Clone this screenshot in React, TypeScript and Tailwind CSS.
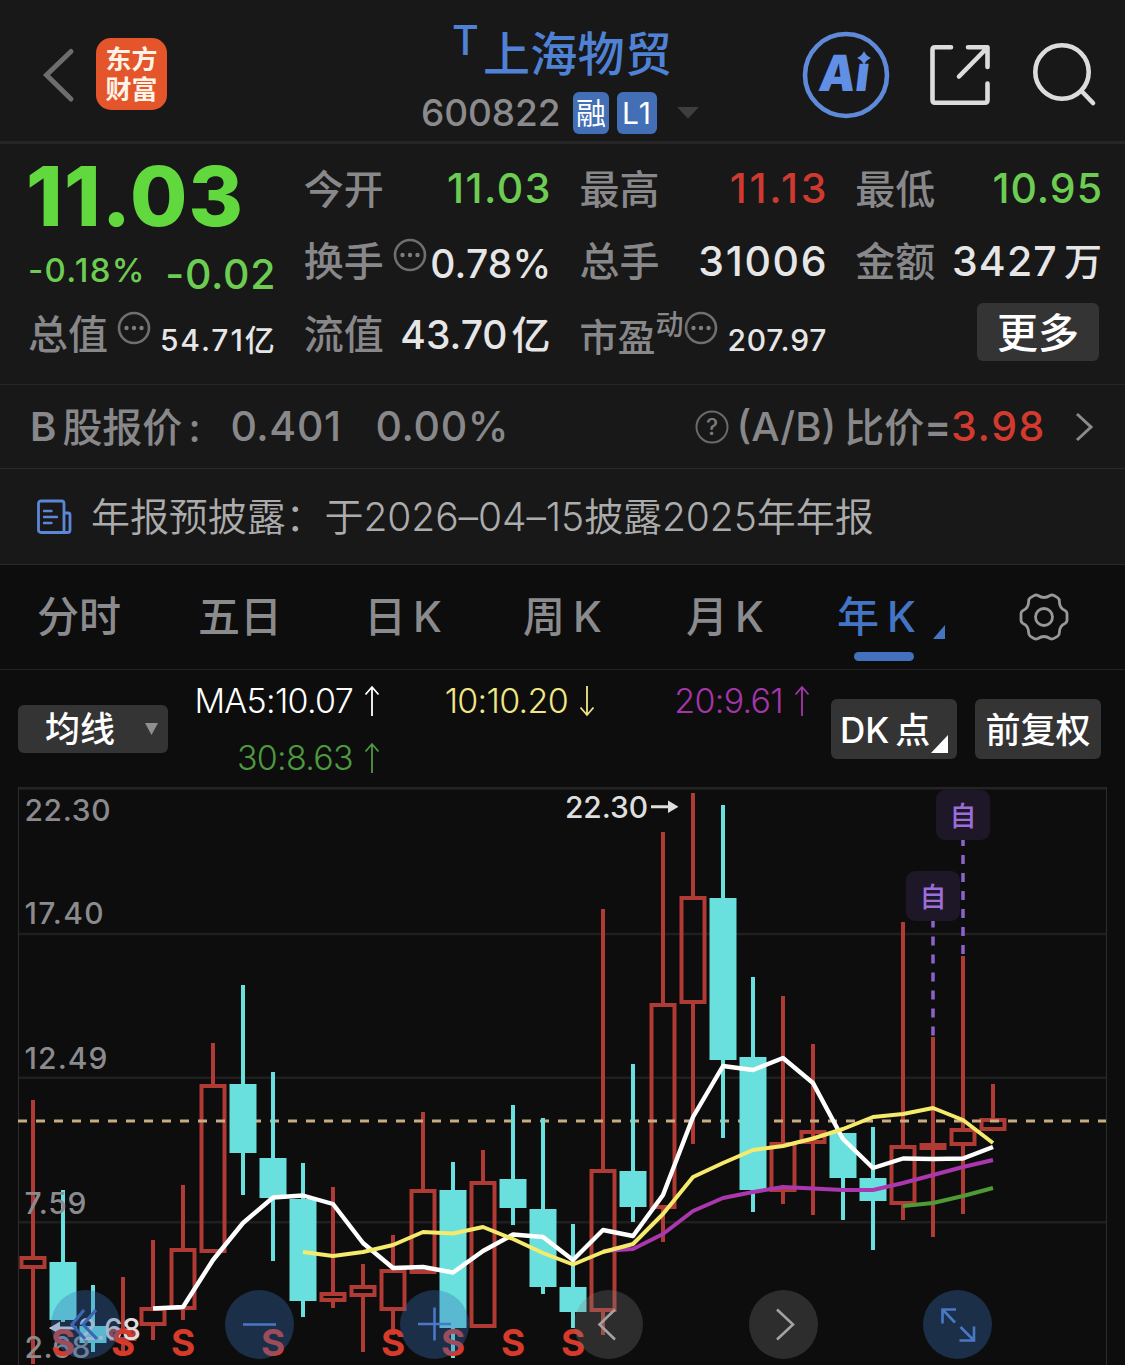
import type { ReactNode } from "react";

type Candle = {
  up: boolean;
  high: number;
  top: number;
  bottom: number;
  low: number;
};

const FIRST_X = 33;
const STEP = 30;

const RED = "#b03a34";
const CYAN = "#6ae0de";

const up = (high: number, top: number, bottom: number, low: number): Candle => ({
  up: true,
  high,
  top,
  bottom,
  low,
});

const down = (high: number, top: number, bottom: number, low: number): Candle => ({
  up: false,
  high,
  top,
  bottom,
  low,
});

const candles: Candle[] = [
  up(1100, 1256, 1269, 1364),
  down(1190, 1262, 1320, 1322),
  down(1285, 1326, 1343, 1352),
  up(1277, 1328, 1341, 1356),
  up(1240, 1307, 1326, 1340),
  up(1185, 1248, 1310, 1320),
  up(1043, 1084, 1253, 1253),
  down(985, 1084, 1153, 1195),
  down(1072, 1158, 1198, 1261),
  down(1163, 1199, 1301, 1317),
  up(1187, 1292, 1302, 1308),
  up(1264, 1285, 1297, 1352),
  up(1235, 1269, 1311, 1335),
  up(1112, 1189, 1274, 1274),
  down(1162, 1190, 1328, 1358),
  up(1150, 1181, 1328, 1328),
  down(1105, 1179, 1208, 1225),
  down(1118, 1209, 1287, 1294),
  down(1224, 1287, 1312, 1328),
  up(909, 1169, 1312, 1335),
  down(1064, 1171, 1207, 1222),
  up(832, 1003, 1209, 1242),
  up(793, 896, 1004, 1144),
  down(805, 898, 1060, 1138),
  down(977, 1057, 1190, 1212),
  up(996, 1142, 1192, 1204),
  up(1044, 1130, 1144, 1215),
  down(1133, 1133, 1178, 1220),
  down(1127, 1178, 1201, 1250),
  up(922, 1145, 1205, 1220),
  up(1037, 1143, 1150, 1237),
  up(956, 1128, 1146, 1214),
  up(1084, 1118, 1131, 1131),
];

const averages = [
  {
    color: "#4f9a35",
    start: 29,
    width: 4,
    values: [1206, 1203, 1196, 1188],
  },
  {
    color: "#ab37ae",
    start: 19,
    width: 4,
    values: [
      1251, 1249, 1234, 1211, 1198, 1192, 1187, 1188.5, 1190, 1190, 1183, 1175, 1167, 1160,
    ],
  },
  {
    color: "#ffffff",
    start: 4,
    width: 4.4,
    values: [
      1308.5, 1307, 1260, 1223, 1197.5, 1195.5, 1204, 1243, 1268, 1267, 1272.5, 1251, 1234.5,
      1237, 1260, 1230, 1236, 1195, 1117, 1066, 1070, 1058, 1083, 1139, 1168, 1158.5, 1159,
      1158.5, 1147,
    ],
  },
  {
    color: "#f6ea6c",
    start: 9,
    width: 4,
    values: [
      1252, 1256, 1252, 1245, 1232, 1233.5, 1227, 1239, 1253, 1264.5, 1252, 1244, 1214, 1177,
      1163, 1150, 1146, 1138.5, 1129, 1117, 1114, 1108, 1120, 1143,
    ],
  },
];

const axisLabels = [
  { text: "22.30", y: 821, width: 86 },
  { text: "17.40", y: 924, width: 79 },
  { text: "12.49", y: 1069, width: 83 },
  { text: "7.59", y: 1213.5, width: 62 },
  { text: "2.68", y: 1358, width: 66 },
];

const sellMarks = [63, 123, 183, 273, 393, 453, 513, 573];

function CandleShape({ candle, index }: { candle: Candle; index: number }) {
  const x = FIRST_X + index * STEP;
  const { high, top, bottom, low } = candle;

  if (!candle.up) {
    return (
      <g fill={CYAN}>
        <rect x={x - 2} y={high} width={4} height={low - high} />
        <rect x={x - 13.5} y={top} width={27} height={bottom - top} />
      </g>
    );
  }

  return (
    <g fill={RED}>
      <rect x={x - 2} y={high} width={4} height={top - high} />
      <rect x={x - 2} y={bottom} width={4} height={low - bottom} />
      <rect
        x={x - 11.5}
        y={top + 2}
        width={23}
        height={bottom - top - 4}
        fill="none"
        stroke={RED}
        strokeWidth={4}
      />
      {/* this wick runs straight through its short body */}
      {index === 26 && <rect x={x - 2} y={top} width={4} height={bottom - top} />}
    </g>
  );
}

function SelfPick({ x, y }: { x: number; y: number }) {
  return (
    <g>
      <rect x={x - 27} y={y} width={54} height={50} rx={9} fill="#1e1728" />
      <text x={x} y={y + 35.5} fontSize={27} fontWeight={500} fill="#9d6ddb" textAnchor="middle">
        自
      </text>
    </g>
  );
}

function Chart() {
  const indexed = candles.map((candle, index) => ({ candle, index }));

  return (
    <svg className="block" width="1125" height="578" viewBox="0 787 1125 578">
      <g stroke="#242425" strokeWidth={2.5} fill="none">
        <path d="M18 788.2H1107" />
        <path d="M18 934H1107M18 1077.7H1107M18 1222.3H1107" stroke="#1f1f20" />
        <path d="M18.5 787V1365M1106.5 787V1365" strokeWidth={1.2} stroke="#2a2a2b" />
      </g>

      {indexed
        .filter(({ candle }) => candle.up)
        .map(({ candle, index }) => (
          <CandleShape key={index} candle={candle} index={index} />
        ))}
      <path d="M18 1121H1106" stroke="#c9ab80" strokeWidth={3} strokeDasharray="9 9" />
      {indexed
        .filter(({ candle }) => !candle.up)
        .map(({ candle, index }) => (
          <CandleShape key={index} candle={candle} index={index} />
        ))}

      {averages.map((line) => (
        <polyline
          key={line.color}
          points={line.values
            .map((value, i) => `${FIRST_X + (line.start + i) * STEP},${value}`)
            .join(" ")}
          fill="none"
          stroke={line.color}
          strokeWidth={line.width}
          strokeLinejoin="round"
        />
      ))}

      <g stroke="#8d62cc" strokeWidth={3.5} strokeDasharray="9 9">
        <path d="M933 921V1036" strokeDashoffset={2.5} />
        <path d="M963 840V956" strokeDashoffset={3} />
      </g>
      <SelfPick x={963} y={790} />
      <SelfPick x={933} y={871} />

      <g fontSize={30} fontWeight={500} fill="#8b8b8e">
        {axisLabels.map((label) => (
          <text key={label.text} x={24.5} y={label.y} textLength={label.width}>
            {label.text}
          </text>
        ))}
      </g>

      <g fontSize={30} fontWeight={500} fill="#dededf">
        <text x={565} y={817.7} textLength={83}>
          22.30
        </text>
        <path d="M651 805.3H668V800.5L678.5 806.8L668 813V808.3H651Z" />
        <text x={78} y={1340} textLength={63}>
          2.68
        </text>
        <path d="M77 1326.5H60V1321.5L49 1328L60 1334.5V1329.5H77Z" />
      </g>

      <g fontSize={37} fontWeight={700} fill="#d53a2b" textAnchor="middle">
        {sellMarks.map((x) => (
          <text key={x} x={x} y={1356}>
            S
          </text>
        ))}
      </g>
    </svg>
  );
}

function RoundButton({ blue, children }: { blue?: boolean; children: ReactNode }) {
  return (
    <button
      className={
        blue
          ? "size-[69px] rounded-full bg-[#3670b8]/35 text-[#4a78c4]"
          : "size-[69px] rounded-full bg-[#808080]/28 text-[#a3a3a4]"
      }
    >
      <svg
        className="block"
        width="69"
        height="69"
        viewBox="0 0 69 69"
        fill="none"
        stroke="currentColor"
        strokeWidth="2.6"
      >
        {children}
      </svg>
    </button>
  );
}

function ChartControls() {
  return (
    <div className="absolute left-[50.5px] top-[503px] flex w-[942px] justify-between">
      <RoundButton blue>
        <path d="M33 20L21 34.5L34 49M45 20L32 34.5L46 49" stroke="#3a66b4" strokeWidth="3.2" />
      </RoundButton>
      <RoundButton blue>
        <path d="M18 34.5H51" />
      </RoundButton>
      <RoundButton blue>
        <path d="M18 34H51M34.5 17.5V50.5" />
      </RoundButton>
      <RoundButton>
        <path d="M41 19.5L25.5 34.5L41 49.5" />
      </RoundButton>
      <RoundButton>
        <path d="M28 19.5L44 34.5L28 49.5" />
      </RoundButton>
      <RoundButton blue>
        <path d="M33 19.5H19.5V33.5M19.500 19.5L32 32.5M51 36.5V50.5H36.5M51 50.5L37.5 37" />
      </RoundButton>
    </div>
  );
}

function MoreDots() {
  return (
    <svg className="-mt-3 block shrink-0" width="34" height="34" viewBox="0 0 34 34">
      <circle cx="17" cy="17" r="15" fill="none" stroke="#6f6f70" strokeWidth="2.6" />
      <g fill="#7d7d7e">
        <circle cx="9.5" cy="17" r="2.2" />
        <circle cx="17" cy="17" r="2.2" />
        <circle cx="24.5" cy="17" r="2.2" />
      </g>
    </svg>
  );
}

function Header() {
  return (
    <header className="flex h-[144px] border-b-3 border-[#262627]">
      <div className="flex w-[421px] items-start pl-[42px] pt-[38px]">
        <svg width="34" height="72" viewBox="0 0 34 72" fill="none" stroke="#6d6d6d">
          <path d="M29 13.5L4.5 37L29 61" strokeWidth="5" strokeLinecap="round" />
        </svg>
        <div className="ml-[20px] flex h-[72px] w-[71px] flex-col items-center justify-center rounded-[15px] bg-[#e5552c] pt-0.5 text-[26px] font-bold leading-[30px] text-[#fff3e6]">
          <span>东方</span>
          <span>财富</span>
        </div>
      </div>

      <div className="w-[280px]">
        <div className="flex pl-[31px] pt-[19px] text-[#4f81d5]">
          <span className="mt-[0.5px] w-[31px] text-[41px] font-medium leading-none">T</span>
          <span className="mt-[11px] text-[47px] font-medium leading-none tracking-[0.3px]">
            上海物贸
          </span>
        </div>
        <div className="mt-[14px] flex items-center">
          <span className="w-[152px] text-[37px] font-medium leading-none tracking-[-0.1px] text-[#8b8b8d]">
            600822
          </span>
          <span className="mt-px flex h-[42px] w-[36px] items-center justify-center rounded-md bg-[#426fb5] text-[30px] leading-none text-white">
            融
          </span>
          <span className="ml-2 mt-px flex h-[42px] w-[40px] items-center justify-center rounded-md bg-[#426fb5] text-[30px] leading-none tracking-[1px] text-white">
            L1
          </span>
          <svg className="ml-[20px]" width="22" height="12" viewBox="0 0 22 12">
            <path d="M0 0H22L11 11.5Z" fill="#3e3e3f" />
          </svg>
        </div>
      </div>

      <div className="flex items-start pt-[30px]">
        <svg className="ml-[100px]" width="90" height="90" viewBox="0 0 90 90">
          <circle cx="45" cy="45" r="41" fill="none" stroke="#5f8ad9" strokeWidth="4.6" />
          <text
            x="24"
            y="61"
            fontSize="50"
            fontWeight="900"
            fill="#628fe6"
            textLength="50"
            lengthAdjust="spacingAndGlyphs"
            transform="skewX(-7)"
          >
            Aı
          </text>
          <path d="M63 21Q65 26 70 28Q65 30 63 35Q61 30 56 28Q61 26 63 21Z" fill="#628fe6" />
        </svg>
        <svg
          className="ml-[37px]"
          width="66"
          height="90"
          viewBox="0 0 66 90"
          fill="none"
          stroke="#dcdcdc"
          strokeWidth="4.6"
          strokeLinecap="round"
          strokeLinejoin="round"
        >
          <path d="M23 17.3H7Q4.5 17.3 4.5 20V70Q4.5 72.7 7 72.7H57Q59.5 72.7 59.5 70V53.5" />
          <path d="M40 17.3H59.5V37M58.5 18.5L31 46.5" />
        </svg>
        <svg
          className="ml-[37px]"
          width="70"
          height="90"
          viewBox="0 0 70 90"
          fill="none"
          stroke="#dcdcdc"
          strokeWidth="4.6"
          strokeLinecap="round"
        >
          <circle cx="31" cy="42" r="26.7" />
          <path d="M50.5 61L62 73" />
        </svg>
      </div>
    </header>
  );
}

function Cell({ label, children }: { label: ReactNode; children: ReactNode }) {
  return (
    <div className="flex h-[72.5px] items-center justify-between whitespace-nowrap font-medium leading-none">
      <div className="flex items-center pt-[3px] text-[40px] text-[#88888b]">{label}</div>
      <div className="flex items-center pt-px text-[41px] text-[#e6e6e7]">{children}</div>
    </div>
  );
}

function Quote() {
  return (
    <section className="grid h-[241px] grid-cols-4 content-start gap-x-[29px] border-b border-[#262627] pl-[28px] pr-[23px] pt-2">
      <div className="-ml-0.5 flex h-[72.5px] items-center whitespace-nowrap pt-4 text-[83px] font-extrabold leading-none tracking-[1.3px] text-[#62d83f]">
        11.03
      </div>
      <Cell label="今开">
        <span className="-mr-[1.5px] tracking-[1.5px] text-[#6ccd52]">11.03</span>
      </Cell>
      <Cell label="最高">
        <span className="-mr-[3px] tracking-[2.8px] text-[#cf3a30]">11.13</span>
      </Cell>
      <Cell label="最低">
        <span className="-mr-px tracking-[1px] text-[#6ccd52]">10.95</span>
      </Cell>

      <div className="flex h-[72.5px] items-center justify-between whitespace-nowrap font-medium leading-none text-[#6ccd52]">
        <span className="pt-[19px] text-[33px] tracking-[1.3px]">-0.18%</span>
        <span className="-mr-[1.5px] pt-7 text-[41px] tracking-[0.7px]">-0.02</span>
      </div>
      <Cell
        label={
          <>
            换手
            <span className="-mt-0.5 ml-[9px]">
              <MoreDots />
            </span>
          </>
        }
      >
        <span className="-mr-px pt-1 text-[39px] tracking-[0.2px]">0.78%</span>
      </Cell>
      <Cell label="总手">
        <span className="-mr-[2px] tracking-[1.7px]">31006</span>
      </Cell>
      <Cell label="金额">
        <span className="tracking-[1.2px]">3427</span>
        <span className="ml-1.5 text-[38px]">万</span>
      </Cell>

      <Cell
        label={
          <>
            总值
            <span className="-mt-0.5 ml-[9px]">
              <MoreDots />
            </span>
          </>
        }
      >
        <span className="pt-3 text-[30px] tracking-[1.9px]">54.71</span>
        <span className="pt-3 text-[30px]">亿</span>
      </Cell>
      <Cell label="流值">
        <span className="pt-0.5 text-[39px]">
          43.70<span className="ml-1">亿</span>
        </span>
      </Cell>
      <Cell
        label={
          <>
            <span className="pt-1 text-[38px]">市盈</span>
            <span className="-mt-5 text-[28px]">动</span>
            <span className="-mt-0.5">
              <MoreDots />
            </span>
          </>
        }
      >
        <span className="-mr-px pt-3 text-[30px] tracking-[0.8px]">207.97</span>
      </Cell>
      <div className="flex h-[72.5px] items-center justify-end pb-0.5 pr-[3px]">
        <button className="h-[58px] w-[122px] rounded-md bg-[#343435] pt-0.5 text-[41px] font-medium leading-none text-white">
          更多
        </button>
      </div>
    </section>
  );
}

function BShareRow() {
  return (
    <section className="flex h-[84px] items-center whitespace-nowrap border-b border-[#29292a] pl-[30px] pr-[31px] text-[40px] font-medium leading-none text-[#88888a]">
      <span className="font-semibold">B</span>
      <span className="ml-1.5 w-[168px] pt-0.5">
        股报价<span className="ml-1.5">:</span>
      </span>
      <span className="w-[145px] text-[41px] tracking-[0.6px]">0.401</span>
      <span className="text-[41px] tracking-[0.7px]">0.00%</span>
      <svg className="ml-auto" width="36" height="36" viewBox="0 0 36 36" fill="none">
        <circle cx="18" cy="18" r="15.5" stroke="#6a6a6b" strokeWidth="2" />
        <text x="18" y="26" fontSize="23" fill="#7b7b7c" textAnchor="middle">
          ?
        </text>
      </svg>
      <span className="ml-[7px]">(A/B)</span>
      <span className="ml-2 pt-0.5">比价</span>
      <span className="font-semibold">=</span>
      <span className="text-[41px] tracking-[1.6px] text-[#d23a2e]">3.98</span>
      <svg className="ml-[28px]" width="20" height="32" viewBox="0 0 20 32" fill="none">
        <path d="M3 3L17 16L3 29" stroke="#8b8b8d" strokeWidth="3" />
      </svg>
    </section>
  );
}

function NewsRow() {
  return (
    <section className="flex h-[96px] items-center whitespace-nowrap border-b border-[#29292a] pl-[36px] text-[39px] leading-none text-[#acacad]">
      <svg
        width="36"
        height="36"
        viewBox="0 0 36 36"
        fill="none"
        stroke="#5c86d6"
        strokeWidth="2.8"
        strokeLinejoin="round"
      >
        <path d="M28 33.5H5Q2.5 33.5 2.5 31V4.5Q2.5 2 5 2H25.5Q28 2 28 4.5Z" />
        <path d="M28 14H32Q34 14 34 16V31Q34 33.5 31.5 33.5H28" />
        <path d="M8 12H15.5M8 18H21M8 24H15.5" strokeLinecap="round" strokeWidth="2.4" />
      </svg>
      <p className="ml-[19px] font-[350] tracking-[-0.08px]">
        年报预披露：于2026–04–15披露2025年年报
      </p>
    </section>
  );
}

function Tabs() {
  return (
    <nav className="flex h-[105px] items-center whitespace-nowrap border-b border-[#222223] bg-[#0d0d0d] pl-[37px] text-[42px] font-medium leading-none text-[#8b8b8e]">
      <span className="w-[161px]">分时</span>
      <span className="w-[166px]">五日</span>
      <span className="w-[159px]">
        日<span className="ml-[7px]">K</span>
      </span>
      <span className="w-[163px]">
        周<span className="ml-2">K</span>
      </span>
      <span className="w-[151px]">
        月<span className="ml-[7px]">K</span>
      </span>
      <span className="relative flex h-full w-[110px] items-center text-[#4475c4]">
        年<span className="ml-2">K</span>
        <svg className="ml-[17px] mt-[29px]" width="12" height="14" viewBox="0 0 12 14">
          <path d="M12 0V14H0Z" fill="currentColor" />
        </svg>
        <span className="absolute bottom-[8px] left-[17px] h-[9px] w-[60px] rounded-full bg-[#4371bd]" />
      </span>
      <svg
        className="ml-[72px]"
        width="50"
        height="50"
        viewBox="0 0 50 50"
        fill="none"
        stroke="#98989a"
        strokeWidth="2.8"
        strokeLinejoin="round"
      >
        <path d="M19 3.5Q25 7.5 31 3.5Q33 2.5 35 3.6L38.5 5.6Q40.500 7 40.3 9Q40.5 16.5 46 18.5Q47.8 19.5 48 21.5V28.5Q47.8 30.5 46 31.5Q40.5 33.5 40.3 41Q40.5 43 38.5 44.4L35 46.4Q33 47.5 31 46.5Q25 42.5 19 46.5Q17 47.5 15 46.4L11.5 44.4Q9.5 43 9.7 41Q9.5 33.5 4 31.5Q2.2 30.5 2 28.5V21.5Q2.2 19.5 4 18.5Q9.5 16.5 9.7 9Q9.5 7 11.5 5.6L15 3.6Q17 2.5 19 3.5Z" />
        <circle cx="25" cy="25" r="8.5" />
      </svg>
    </nav>
  );
}

function Arrow({ flip }: { flip?: boolean }) {
  return (
    <svg
      className={flip ? "ml-[11px] block shrink-0 rotate-180" : "ml-[11px] block shrink-0"}
      width="16"
      height="32"
      viewBox="0 0 16 32"
      fill="none"
      stroke="currentColor"
      strokeWidth="1.8"
    >
      <path d="M8 31V2M1.5 9.5L8 2L14.5 9.5" />
    </svg>
  );
}

function Indicators() {
  return (
    <section className="flex h-[117px] items-start whitespace-nowrap bg-[#0d0d0d] pl-[18px] font-medium leading-none text-white">
      <button className="mt-[35px] flex h-[48px] w-[150px] shrink-0 items-center rounded-md bg-[#343435] pl-[27px] text-[35px]">
        均线
        <svg className="ml-[30px]" width="13" height="12" viewBox="0 0 13 12">
          <path d="M0 0H13L6.5 12Z" fill="#8f8f90" />
        </svg>
      </button>
      <div className="ml-[20px] mt-[15px] grid w-[623px] shrink-0 grid-cols-[192px_215px_215px] gap-y-[25px] text-[34px] font-[350] leading-none tracking-[-0.7px]">
        <span className="flex h-8 items-center justify-end">
          MA5:10.07
          <Arrow />
        </span>
        <span className="flex h-8 items-center justify-end text-[#f2e785]">
          10:10.20
          <Arrow flip />
        </span>
        <span className="flex h-8 items-center justify-end text-[#a436aa]">
          20:9.61
          <Arrow />
        </span>
        <span className="flex h-8 items-center justify-end text-[#4d9a40]">
          30:8.63
          <Arrow />
        </span>
      </div>
      <button className="relative ml-[20px] mt-[29px] flex h-[60px] w-[126px] shrink-0 items-center rounded-md bg-[#343435] pl-[9px] pt-0.5 text-[35px]">
        DK<span className="ml-1.5">点</span>
        <svg
          className="absolute bottom-[6px] right-[9px]"
          width="17"
          height="18"
          viewBox="0 0 17 18"
        >
          <path d="M17 0V18H0Z" fill="#ffffff" />
        </svg>
      </button>
      <button className="ml-[18px] mt-[29px] h-[60px] w-[126px] shrink-0 rounded-md bg-[#343435] pt-0.5 text-[35px]">
        前复权
      </button>
    </section>
  );
}

export default function App() {
  return (
    <div className="h-[1365px] w-[1125px] overflow-hidden bg-[#181818] font-['Inter','Noto_Sans_CJK_SC',sans-serif]">
      <Header />
      <Quote />
      <BShareRow />
      <NewsRow />
      <Tabs />
      <Indicators />
      <main className="relative bg-[#0d0d0d]">
        <Chart />
        <ChartControls />
      </main>
    </div>
  );
}
